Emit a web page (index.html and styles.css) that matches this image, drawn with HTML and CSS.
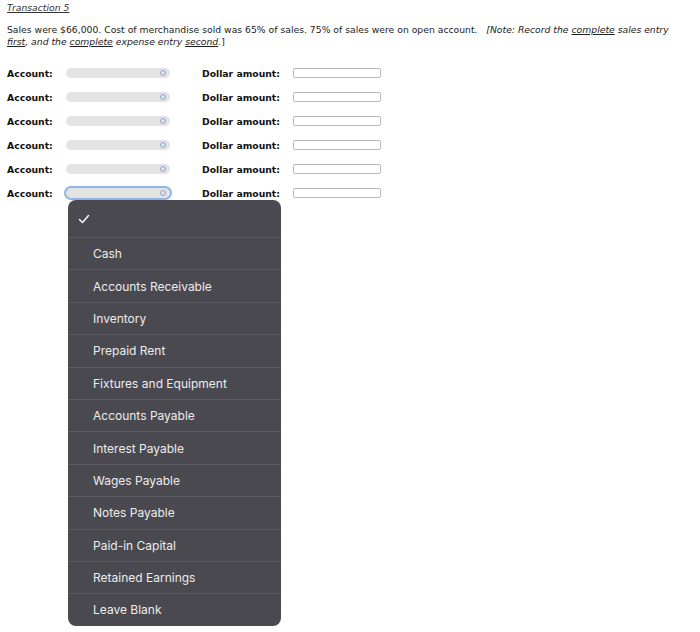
FILE: index.html
```html
<!DOCTYPE html>
<html>
<head>
<meta charset="utf-8">
<link rel="stylesheet" href="styles.css">
</head>
<body>
<div class="page">
  <div class="title">Transaction 5</div>
  <p class="desc">Sales were $66,000. Cost of merchandise sold was 65% of sales. 75% of sales were on open account. &nbsp;&nbsp;<span class="note">[Note: Record the <u>complete</u> sales entry<br><u>first</u>, and the <u>complete</u> expense entry <u>second</u>.</span>]</p>
  <div class="rows">
    <div class="row"><span class="lbl">Account:</span><span class="sel"><span class="arr"></span></span><span class="lbl2">Dollar amount:</span><span class="inp"></span></div>
    <div class="row"><span class="lbl">Account:</span><span class="sel"><span class="arr"></span></span><span class="lbl2">Dollar amount:</span><span class="inp"></span></div>
    <div class="row"><span class="lbl">Account:</span><span class="sel"><span class="arr"></span></span><span class="lbl2">Dollar amount:</span><span class="inp"></span></div>
    <div class="row"><span class="lbl">Account:</span><span class="sel"><span class="arr"></span></span><span class="lbl2">Dollar amount:</span><span class="inp"></span></div>
    <div class="row"><span class="lbl">Account:</span><span class="sel"><span class="arr"></span></span><span class="lbl2">Dollar amount:</span><span class="inp"></span></div>
    <div class="row last"><span class="lbl">Account:</span><span class="sel focus"><span class="arr"></span></span><span class="lbl2">Dollar amount:</span><span class="inp"></span>
      <div class="menu">
        <div class="item check"><svg width="12" height="10" viewBox="0 0 12 10"><path d="M1.5 5.5 L4.5 8.5 L10.5 1.5" fill="none" stroke="#f2f2f2" stroke-width="1.6" stroke-linecap="round" stroke-linejoin="round"/></svg></div>
        <div class="item">Cash</div>
        <div class="item">Accounts Receivable</div>
        <div class="item">Inventory</div>
        <div class="item">Prepaid Rent</div>
        <div class="item">Fixtures and Equipment</div>
        <div class="item">Accounts Payable</div>
        <div class="item">Interest Payable</div>
        <div class="item">Wages Payable</div>
        <div class="item">Notes Payable</div>
        <div class="item">Paid-in Capital</div>
        <div class="item">Retained Earnings</div>
        <div class="item">Leave Blank</div>
      </div>
    </div>
  </div>
</div>
</body>
</html>
```
FILE: styles.css
```css
html, body { margin: 0; padding: 0; background: #fff; }
.page {
  width: 700px; height: 632px; overflow: hidden;
  font-family: "DejaVu Sans", Verdana, sans-serif;
  color: #222;
  padding: 0 0 0 7px;
  box-sizing: border-box;
}
.title {
  font-size: 9.25px; font-style: italic; text-decoration: underline;
  color: #333; padding-top: 2px; line-height: 11px;
}
.desc {
  margin: 11px 0 0 0; font-size: 9.25px; line-height: 12px; width: 686px; color: #222;
}
.note { font-style: italic; }
.rows { margin-top: 13px; display: flex; flex-direction: column; }
.row {
  height: 24px; display: flex; align-items: center; position: relative;
}
.lbl { font-weight: bold; font-size: 9.25px; width: 59px; color: #111; }
.sel {
  width: 104px; height: 10px; background: #e3e3e3; border-radius: 5px;
  position: relative; box-sizing: border-box;
}
.sel.focus { box-shadow: 0 0 0 2px #8fb4e6; }
.arr {
  position: absolute; right: 4px; top: 2px; width: 6px; height: 6px;
  border: 1px solid #8aa9cc; border-radius: 50%; box-sizing: border-box;
}
.lbl2 { font-weight: bold; font-size: 9.25px; margin-left: 32px; width: 91px; color: #111; }
.inp {
  width: 88px; height: 10px; border: 1px solid #bbb; border-radius: 2px;
  box-sizing: border-box; background: #fff;
}
.menu {
  position: absolute; left: 61px; top: 19px; width: 213px;
  background: #4a4950; border-radius: 8px; overflow: hidden;
  font-family: "Inter", "Liberation Sans", sans-serif; font-size: 12px;
  color: #ececec;
}
.item {
  height: 32.4px; display: flex; align-items: center; padding-left: 25px;
  border-top: 1px solid #5d5c63; box-sizing: border-box;
}
.item.check { height: 37px; border-top: none; padding-left: 10px; }
```
